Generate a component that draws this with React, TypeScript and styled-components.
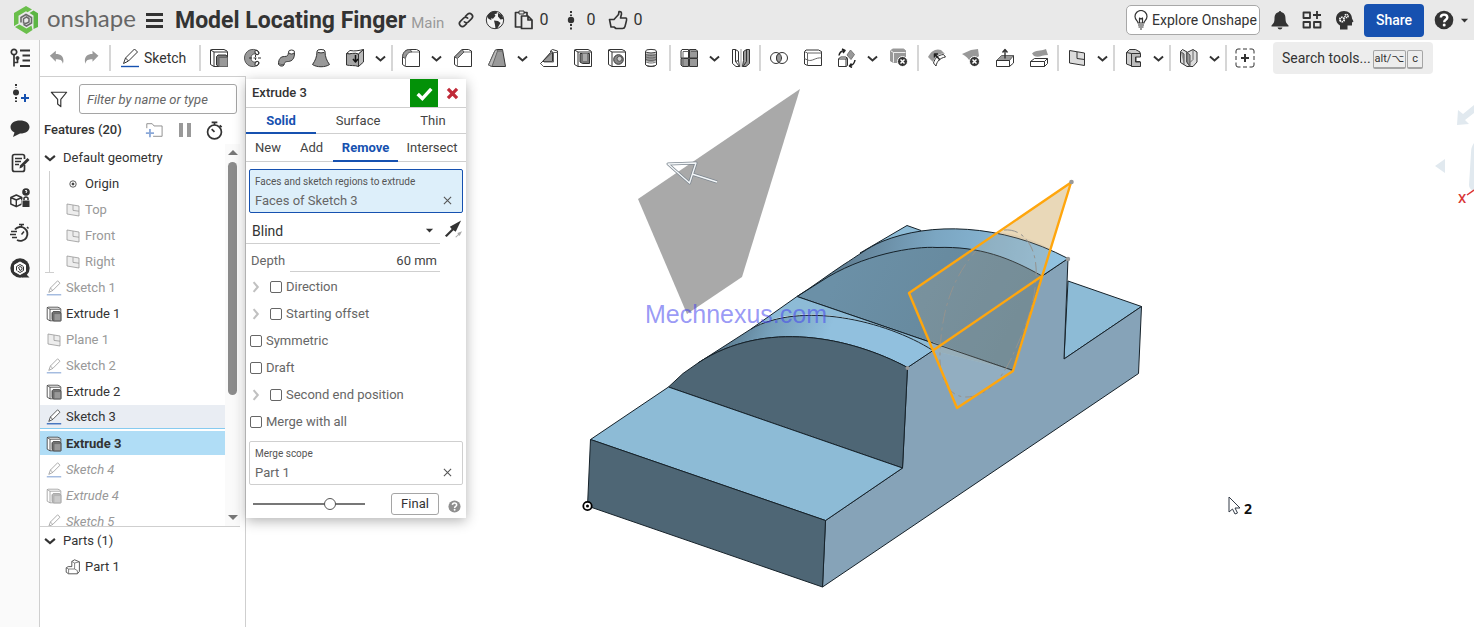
import React from "react";
import styled, { createGlobalStyle, css } from "styled-components";

const ink = "#333333";
const blue = "#1651b0";
const line = "#cfcfcf";

const GlobalStyle = createGlobalStyle`
  * { box-sizing: border-box; }
  body {
    margin: 0;
    background: #fff;
    color: ${ink};
    font-family: Roboto, "Liberation Sans", sans-serif;
    font-size: 14px;
    line-height: 20px;
  }
  button, input, select { font: inherit; color: inherit; }
  button { border: 0; padding: 0; background: none; cursor: pointer; }
  ul { list-style: none; margin: 0; padding: 0; }
  h1, h2 { margin: 0; font: inherit; }
  svg { display: block; flex: none; }
`;

/* ---------- icons ---------- */

const shapes: Record<string, React.ReactNode> = {
  undo: <path d="M1 8l7-6v4c6 0 9 3 9 8 0 2-1 3-1 3 0-4-3-5-8-5v3z" transform="translate(2 1) scale(.85)" fill="#999" stroke="none" />,
  redo: <path d="M17 8L10 2v4c-6 0-9 3-9 8 0 2 1 3 1 3 0-4 3-5 8-5v3z" transform="translate(3 1) scale(.85)" fill="#999" stroke="none" />,
  sketch: (
    <>
      <path d="M3.500 15.500l2-5.500 9-9 3 3-9 9z" fill="#fff" />
      <path d="M5.500 10l3 3" />
      <path d="M1 18.500h18" stroke={blue} strokeWidth="1.400" />
    </>
  ),
  extrude: (
    <>
      <path d="M1.500 3V2l1.500-.5h12l3 1.500q.5.300.5 1v14.500H5l-3.500-2z" fill="#fff" />
      <path d="M1.500 2L5 4h13M5 4v14.500" />
      <path d="M7.500 8.500l1.500-1.500h8l1.500 2v9.500H9.500l-2-1.500z" fill="#777" />
      <path d="M10 9.500h8.500v9H10z" fill="#999" stroke="#666" />
    </>
  ),
  revolve: (
    <>
      <path d="M15 3C9-1 1.500 3 1.500 10S9 21 15 17c2-1.500 1-4-1.500-3.500C11 15 8 13.500 8 10s3-5 5.500-3.500C16 7 17 4.500 15 3z" fill="#999" stroke="#555" />
      <ellipse cx="13.800" cy="4.500" rx="1.600" ry="2.200" fill="#fff" transform="rotate(-30 13.800 4.500)" />
      <ellipse cx="13.800" cy="15.500" rx="1.600" ry="2.200" fill="#fff" transform="rotate(30 13.800 15.500)" />
      <path d="M6 10h13" strokeDasharray="3 1.500" />
      <path d="M12.500 7v6" strokeDasharray="2 1" />
    </>
  ),
  sweep: (
    <>
      <path d="M1.500 16c0-5 2-7.500 6-7.500 3 0 3.500-1 4-4l6 .5c0 6-2.500 8-6 8.500-3.500 0-4 1-4.500 3.500z" fill="#999" />
      <ellipse cx="14.500" cy="4" rx="3" ry="2" fill="#fff" />
      <path d="M1.500 16c.5 2 4 3 5.500 1" fill="#999" />
    </>
  ),
  loft: (
    <>
      <path d="M6 3.500C6 9 4 13 1.500 16.500c4 3 13 3 17 0C16 13 14 9 14 3.500z" fill="#999" />
      <ellipse cx="10" cy="3.200" rx="4" ry="1.700" fill="#fff" />
    </>
  ),
  thicken: (
    <>
      <path d="M1.500 5.500C5 6.500 10 4 13.500 6v12.500C10 17 5 18 1.500 17z" fill="#a5a5a5" />
      <path d="M1.500 5.500L5 2.500c5 1 9 0 13.500-1L13.500 6C10 4 5 6.500 1.500 5.500z" fill="#fff" />
      <path d="M13.500 6l5-4.500V14l-5 4.500z" fill="#bbb" />
      <path d="M10.500 7v6.500M8 11l2.500 3 2.500-3" strokeWidth="1.500" stroke="#111" />
    </>
  ),
  fillet: (
    <>
      <path d="M1.500 9C2 4 5 1.500 9 1.500h6.500l3 1.500v15.500H4.500l-3-2z" fill="#fff" />
      <path d="M1.500 9C2 4 5 1.500 9 1.500L11 4C7 4 5 7 4.500 10.500z" fill="#999" stroke="#555" />
      <path d="M11 4h7M4.500 10.500v8" stroke="#777" />
    </>
  ),
  chamfer: (
    <>
      <path d="M1.500 9L9 1.500h6.500l3 1.500v15.500H4.500l-3-2z" fill="#fff" />
      <path d="M1.500 9L9 1.500 11 4l-6.500 6.500z" fill="#999" stroke="#555" />
      <path d="M11 4h7M4.500 10.500v8" stroke="#777" />
    </>
  ),
  draft: (
    <>
      <path d="M1.500 17L8 2.500l2-1h5.500l3 17H5z" fill="#999" />
      <path d="M8 2.500l2-1 .5 1.500L5 18.500 1.500 17z" fill="#bbb" stroke="#666" />
      <path d="M10.500 3H16" stroke="#666" />
    </>
  ),
  rib: (
    <>
      <path d="M1.500 15.500l2-2 8-9V3l2-1.500 5 1.500v15.500h-14z" fill="#fff" />
      <path d="M3.500 13.500L13.500 4v9.500z" fill="#999" />
      <path d="M11.500 3l3 1.500h4M14.500 4.500v9.500H5M1.500 15.500l3 3" stroke="#666" />
    </>
  ),
  shell: (
    <>
      <path d="M1.500 3V2l1.500-.5h12l3 1.500q.5.300.5 1v14.500H5l-3.500-2z" fill="#fff" />
      <path d="M1.500 2L5 4h13M5 4v14.500" />
      <path d="M7 5.500h9.500v10H9.500L7 14z" fill="#777" />
      <path d="M9.500 5.500h5v8h-5z" fill="#aaa" stroke="#777" />
    </>
  ),
  hole: (
    <>
      <path d="M1.500 3V2l1.500-.5h12l3 1.500q.5.300.5 1v14.500H5l-3.500-2z" fill="#fff" />
      <path d="M1.500 2L5 4h13M5 4v14.500" />
      <circle cx="11.500" cy="11.500" r="4.800" fill="#888" />
      <circle cx="12.500" cy="10.800" r="2.500" fill="#ccc" stroke="#555" />
    </>
  ),
  thread: (
    <>
      <path d="M4.500 3.500v13c1 2.500 10 2.500 11 0v-13z" fill="#fff" />
      <path d="M4.500 5.500v7c2 2 9 2 11 0v-7z" fill="#999" stroke="none" />
      <path d="M4.500 6c2 2 9 2 11 0M4.500 8.500c2 2 9 2 11 0M4.500 11c2 2 9 2 11 0M4.500 13.500c2 2 9 2 11 0" stroke="#666" />
      <path d="M4.500 3v13.500c1 2.500 10 2.500 11 0V3" />
      <ellipse cx="10" cy="3.200" rx="5.500" ry="1.800" fill="#fff" />
    </>
  ),
  pattern: (
    <>
      <path d="M2 3l1-1.500h6.500V10H2z" fill="#fff" />
      <path d="M10.500 1.500H17L18.500 3v7h-8zM2 10.500h7.500v8H3.500L2 17zM10.500 10.500h8v8h-8z" fill="#999" />
      <path d="M4 3.500h5.500M12 3.500h6M4 3.500V18" stroke="#666" />
    </>
  ),
  mirror: (
    <>
      <path d="M1.500 1.500h3v12l4 5H5l-3.500-3z" fill="#fff" />
      <path d="M4.500 1.500l3 2v9l1 6M4.500 13.500l3-1" />
      <path d="M18.500 1.500h-3l-3 2v9l-1 6H15l3.500-3z" fill="#999" />
      <path d="M15.500 1.500v12l-3.500 5" />
      <path d="M10 1v18" stroke="#999" />
    </>
  ),
  boolean: (
    <>
      <circle cx="7" cy="10" r="5.500" fill="#fff" />
      <circle cx="13" cy="10" r="5.500" fill="#fff" />
      <path d="M10 5.400a5.500 5.500 0 0 1 0 9.200 5.500 5.500 0 0 1 0-9.200z" fill="#999" />
    </>
  ),
  split: (
    <>
      <path d="M1.500 3.500l1.500-1.500h12.500l3 1.500v14H4.500l-3-1.500z" fill="#fff" />
      <path d="M1.500 3.500l3 1.500h14M4.500 5v12.500M1.500 10.500l3 1.500c5 2 8-3 14-2" stroke="#666" />
    </>
  ),
  transform: (
    <>
      <path d="M1.500 11l2-2H9l1.500 1.500v7L9 18.500H1.500z" fill="#fff" />
      <path d="M1.500 11H9v7.500M9 11l1.500-1" />
      <path d="M13.500 2l4 4.500-3.500 5-4-4.500z" fill="#999" stroke="#777" />
      <path d="M2 7.500C2.500 4.500 4 3 7 2.500M5 1l3 1.500-2 2.500M18 12c-.5 3-2 5-5 6M15 19.500L12.500 18l2-2.500" strokeWidth="1.500" stroke="#222" />
    </>
  ),
  deletePart: (
    <>
      <path d="M1.500 3l2-2h11l2 1.500v12H4.500l-3-1.500z" fill="#999" stroke="#999" />
      <path d="M2 3l2.500 1.500h12M4.500 4.500v10" stroke="#eee" />
      <circle cx="13.500" cy="13.500" r="5" fill={ink} stroke="#fff" />
      <path d="M11.500 11.500l4 4m0-4l-4 4" stroke="#fff" strokeWidth="1.500" />
    </>
  ),
  modifyFillet: (
    <>
      <path d="M1 9C4 3 9 0 14 2l4 4c-5-1-9 1-12 8z" fill="#999" stroke="none" />
      <path d="M9 18c1-5 4-8 9.500-9l-2-2.500C11 7 8 10 6.500 15z" fill="#fff" />
      <path d="M13 12L8 6.500M7.500 9.500V6H11" strokeWidth="1.500" stroke="#222" />
    </>
  ),
  deleteFace: (
    <>
      <path d="M1 6l9-4 7-1 1 7-8 7C8 11 5 8 1 6z" fill="#999" stroke="none" />
      <circle cx="13.500" cy="13.500" r="5" fill={ink} stroke="#fff" />
      <path d="M11.500 11.500l4 4m0-4l-4 4" stroke="#fff" strokeWidth="1.500" />
    </>
  ),
  moveFace: (
    <>
      <path d="M1.500 12.500l4-4 9 0 4-1v7.500l-4 3.500h-13z" fill="#fff" />
      <path d="M1.500 12.500l5-5 12 0-4 5z" fill="#999" stroke="#666" />
      <path d="M14.500 12.500v6M1.500 12.500h13" />
      <path d="M10 10.500V2M7.500 4.500L10 1.500l2.500 3" strokeWidth="1.400" />
    </>
  ),
  replaceFace: (
    <>
      <path d="M3 5.500c4-4 8-2 14-4.500l2 6c-6 0-9 3-14 1z" fill="#999" stroke="none" />
      <path d="M1.500 13.500l4-3h13v5l-3 3h-14z" fill="#fff" />
      <path d="M1.500 13.500h14v5M15.500 13.500l3-3" />
    </>
  ),
  plane: (
    <>
      <path d="M2.500 2.500l15 2.500v12.500l-15-2.500z" fill="#ddd" />
      <path d="M10 4v6.500l7.500 1" />
    </>
  ),
  sheet: (
    <>
      <path d="M3.500 4.500l3-3h6l4.500 2.500v4.500h-4v5h4v5h-7L3.500 16z" fill="#ccc" />
      <path d="M8.500 5.500h9V9h-5v5h5v4.500h-9z" fill="#bbb" />
      <path d="M3.500 4.500l5 1" />
    </>
  ),
  bend: (
    <>
      <path d="M1.500 3.500l2-2 4.500 2.500v10l3 4.500H8l-6.500-4z" fill="#ddd" />
      <path d="M8 14V4.500l6-3 4 2.500v10l-4 4.500h-3z" fill="#ddd" />
      <path d="M8 4.500l3 2.500v11.500L8 14zM1.500 3.500L5 6v10.500" fill="#999" stroke="#555" />
      <path d="M14 1.500v10l-3 3" stroke="#666" />
    </>
  ),
  addTool: (
    <>
      <path d="M5.500 1H3Q1 1 1 3v2.500M14.500 1H17q2 0 2 2v2.500M5.500 19H3q-2 0-2-2v-2.500M14.500 19H17q2 0 2-2v-2.500M8 1h4M8 19h4M1 8v4M19 8v4" />
      <path d="M10 6v8M6 10h8" strokeWidth="2" />
    </>
  ),
  part: (
    <>
      <path d="M1.500 11l2.500-1.500h4.500V3l3.500-2 6 2.500v12L15.500 18.500h-11l-3-2z" fill="#fff" />
      <path d="M1.500 11l3 1.500h7.500V5l6-1.500M8.500 3L12 5M4.500 12.500v6M12 12.500l3.500 2v4" stroke="#666" />
    </>
  ),
  origin: (
    <>
      <circle cx="10" cy="10" r="4" />
      <circle cx="10" cy="10" r="1.300" fill={ink} />
    </>
  ),
  filter: <path d="M1.500 2.500h17l-6.500 8v8L8.500 15.500v-5z" strokeWidth="1.300" />,
  folder: (
    <>
      <path d="M2 8V3h6l2 2.500h9V17H9" stroke="#888" />
      <path d="M5.500 9v9M1 13.500h9" stroke="#8aa8d8" strokeWidth="2" />
    </>
  ),
  pause: <path d="M4 3h4v14H4zM12 3h4v14h-4z" fill="#999" stroke="none" />,
  stopwatch: (
    <>
      <circle cx="10" cy="11.500" r="7.300" strokeWidth="1.800" />
      <path d="M7 1.500h6M10 1.500v3M15.500 4.500l2 2M10 11.500L7 8.500" strokeWidth="1.800" />
    </>
  ),
  featureTree: (
    <>
      <circle cx="4" cy="4" r="2.700" strokeWidth="1.700" />
      <path d="M4 7v11.500M4 14.500h3.500V11" strokeWidth="1.700" />
      <circle cx="7.500" cy="10" r="1.500" fill={ink} />
      <path d="M10 2.500h10M12.500 7.500H20M12.500 12.500H20M10 18h10" strokeWidth="1.900" />
    </>
  ),
  addVersion: (
    <>
      <path d="M6 1v4M6 14v5" strokeWidth="2" strokeDasharray="2 1.500" />
      <circle cx="6" cy="9.500" r="3" fill={ink} stroke="none" />
      <path d="M15 11v8M11 15h8" stroke={blue} strokeWidth="2" />
    </>
  ),
  comment: <path d="M10 2.500c5.500 0 9.500 2.700 9.500 6.500S16 15.500 10 15.500L3 19l1.500-4.500C2 13.500.5 11.500.5 9 .5 5.200 4.500 2.500 10 2.500z" fill={ink} stroke="none" />,
  notes: (
    <>
      <path d="M14.500 12v4.500q0 2-2 2h-8q-2 0-2-2v-13q0-2 2-2h8q2 0 2 2V6" strokeWidth="1.700" />
      <path d="M5 5.500h7M5 8.500h6M5 11.500h4" strokeWidth="1.300" />
      <path d="M9.500 15.500l.5-3L17.500 5l2 2-7.500 7.500z" fill={ink} stroke="none" />
    </>
  ),
  cubeLock: (
    <>
      <path d="M.8 9.500l5.500-2.500 5.500 2.500v6.500l-5.500 2.700L.8 16zM.8 9.500l5.500 2.500 5.500-2.500M6.300 12v6.500" strokeWidth="1.400" />
      <circle cx="16" cy="4" r="3.800" fill={ink} stroke="none" />
      <path d="M15 3q1-1.500 2 0c0 1-1 1-1 2" stroke="#fff" />
      <path d="M12 12h8v7.500h-8z" fill={ink} stroke="#fafafa" />
      <path d="M14 12V10q2-2 4 0v2" strokeWidth="1.500" />
    </>
  ),
  fastWatch: (
    <>
      <path d="M5 6.500A7 7 0 1 1 7 17" strokeWidth="1.900" />
      <path d="M9 1.500h5M11.500 1.500v3M17 4l1.500 1.500M11.500 11.500L14 8.500M1 8.500h6M0 11.500h6M2 14.500h5" strokeWidth="1.500" />
    </>
  ),
  onshapeBubble: (
    <>
      <circle cx="10" cy="10" r="9.700" fill={ink} stroke="none" />
      <path d="M12 12l7.500 7.500H12z" fill={ink} stroke="none" />
      <path d="M10 4l5.500 3v6.500L10 16.500 4.500 13.500V7z" stroke="#fff" fill="#fff" />
      <path d="M6.500 12.500V8.500L10 6.500l3.500 2M13.500 9v3.500L10 14.500l-2.500-1.500M8.500 9.500l1.500-1 2 1v2l-2 1z" stroke={ink} />
    </>
  ),
  link: (
    <g transform="rotate(-45 10 10)" strokeWidth="1.600">
      <path d="M8.500 13H5a3 3 0 0 1 0-6h5a3 3 0 0 1 2.500 3.500" />
      <path d="M11.500 7H15a3 3 0 0 1 0 6h-5a3 3 0 0 1-2.500-3.500" />
    </g>
  ),
  globe: (
    <>
      <circle cx="10" cy="10" r="8.700" fill="#f3f3f3" />
      <path d="M3 5C5 2 8 1 11 1.300l1.500 2-3 1 1 1.500-2.500 3-2-.5.500 2-3-1.500L2 6.500zM13 3l4 2 1.500 4-3 .500-2.500-3zM9 10.500l4 .500 2.500 2-3 5-2 .700-.500-4z" fill={ink} stroke="none" />
    </>
  ),
  copyDoc: (
    <>
      <path d="M7 17H1.500V2.500H13V6" strokeWidth="1.700" />
      <path d="M5 1h5v3H5z" fill="#e9e9e9" />
      <path d="M7.500 6H14l4 4v8.500H7.500zM14 6v4h4" strokeWidth="1.700" />
    </>
  ),
  version: (
    <>
      <path d="M10 1v5M10 14v5.500" strokeWidth="2" strokeDasharray="2 1.500" />
      <circle cx="10" cy="10" r="3.200" fill={ink} stroke="none" />
    </>
  ),
  thumb: <path d="M1.500 9.500h4.500l4.500-5 .5-3q2.500-.5 2.500 2.500L12.500 8h5.500q1 .5.500 2.500l-1.500 6q-.5 2-2.500 2H8L6 17H3z" strokeWidth="1.600" />,
  bulb: (
    <path d="M7 13c0-2-3-3-3-6.500a6 6 0 0 1 12 0C16 10 13 11 13 13zM7 15h6M7.500 17h5M9 19h2M8.500 12.500V8l1.500 1 1.500-1v4.500" strokeWidth="1.200" />
  ),
  bell: <path d="M10 1q1 0 1.200 1C14.500 3 15.500 5 15.500 9c0 3 1 4.500 3 6.500v1h-17v-1c2-2 3-3.500 3-6.500 0-4 1-6 4.300-7Q9 1 10 1zM7.500 17.500h5Q12 19.500 10 19.500t-2.500-2z" fill={ink} stroke="none" />,
  apps: <path d="M1.500 2.500h6.500v5.500H1.500zM1.500 12h6.500v5.500H1.500zM12 12h6.500v5.500H12zM15 1v8M11 5h8" strokeWidth="1.800" />,
  head: (
    <>
      <path d="M6 19.500v-4C3.500 14 2 11.500 2 9c0-5 3.500-8 8-8s8 3 8 7.500l1.500 3-1.500 1v3h-4.500v4z" fill={ink} stroke="none" />
      <circle cx="8" cy="9.500" r="2.200" stroke="#fff" strokeWidth="1.800" strokeDasharray="1.500 .6" />
      <circle cx="12.500" cy="6" r="1.600" stroke="#fff" strokeWidth="1.500" strokeDasharray="1.200 .5" />
    </>
  ),
  help: (
    <>
      <circle cx="10" cy="10" r="9.300" fill="currentColor" stroke="none" />
      <path d="M6.800 7.500C7 3.500 13.300 3.800 13.300 7.500c0 2.300-3.100 2.300-3.100 4.700" stroke="#fff" strokeWidth="2.400" />
      <circle cx="10.200" cy="15" r="1.500" fill="#fff" stroke="none" />
    </>
  ),
  chevDown: <path d="M3 7l7 6 7-6" strokeWidth="3" strokeLinejoin="miter" />,
  chevRight: <path d="M6 2l7 8-7 8" strokeWidth="3.400" strokeLinejoin="miter" />,
  caret: <path d="M2 6h16l-8 8.500z" fill={ink} stroke="none" />,
  check: <path d="M2 10.500l5.500 5.500L18 4.500" stroke="#fff" strokeWidth="4" strokeLinejoin="miter" />,
  cross: <path d="M3 3l14 14M17 3L3 17" stroke="#c02a38" strokeWidth="5" />,
  clear: <path d="M2 2l16 16M18 2L2 18" strokeWidth="2.400" stroke="#555" />,
  flip: (
    <>
      <path d="M1 17.500L8.500 10 6.500 7.500 19 .5 13 13l-2.500-1.500L3 19z" fill={ink} stroke="none" />
      <path d="M12.500 19l3-3-.5-1.500 5-2-2.500 5-1.500-.5-2.500 2.500z" fill="#aaa" stroke="none" />
    </>
  ),
};

const Glyph = styled.svg<{ $dim?: boolean }>`
  opacity: ${(p) => (p.$dim ? 0.5 : 1)};
`;

function Icon({ name, size = 20, dim }: { name: string; size?: number; dim?: boolean }) {
  return (
    <Glyph width={size} height={size} viewBox="0 0 20 20" fill="none" stroke={ink} strokeLinejoin="round" $dim={dim} aria-hidden="true">
      {shapes[name]}
    </Glyph>
  );
}

/* ---------- page frame ---------- */

const Page = styled.div`
  display: flex;
  flex-direction: column;
  height: 100vh;
  overflow: hidden;
`;

const Header = styled.header`
  display: flex;
  align-items: center;
  height: 40px;
  flex: none;
  padding: 0 5px 0 14px;
  background: #e9e9e9;
`;

const Brand = styled.a`
  display: flex;
  align-items: center;
  gap: 8px;
  width: 132px;
  color: #666;
  font: 400 24px/30px Lato, sans-serif;
  text-decoration: none;
`;

const BrandName = styled.span`
  padding-bottom: 4px;
`;

const MenuButton = styled.button`
  display: grid;
  gap: 3px;
  width: 17px;
  margin-right: 12px;
`;

const MenuBar = styled.span`
  height: 3px;
  background: ${ink};
`;

const DocTitle = styled.h1`
  padding-top: 2px;
  font-size: 23px;
  line-height: 28px;
  font-weight: 700;
  white-space: nowrap;
`;

const Branch = styled.span`
  margin: 6px 12px 0 5px;
  font-size: 15px;
  color: #999;
`;

const HeadStat = styled.button<{ $wide?: boolean }>`
  display: flex;
  align-items: center;
  gap: 5px;
  margin-right: ${(p) => (p.$wide ? 13 : 9)}px;
  font-size: 16px;
`;

const HeadEnd = styled.div`
  display: flex;
  align-items: center;
  gap: 12px;
  margin-left: auto;
`;

const ExploreButton = styled.button`
  display: flex;
  align-items: center;
  gap: 1px;
  height: 30px;
  width: 134px;
  margin-right: -2px;
  padding-left: 4px;
  border: 1px solid #a8a8a8;
  border-radius: 5px;
  background: #fff;
  white-space: nowrap;
`;

const ShareButton = styled.button`
  width: 60px;
  height: 33px;
  margin-left: -2px;
  border-radius: 4px;
  background: ${blue};
  color: #fff;
  font-weight: 500;
`;

const HelpButton = styled.button`
  display: flex;
  align-items: center;
  gap: 6px;
  margin-left: -2px;
`;

const Main = styled.div`
  display: flex;
  flex: 1;
  min-height: 0;
`;

const Rail = styled.nav`
  display: flex;
  flex-direction: column;
  flex: none;
  width: 40px;
  border-right: 1px solid ${line};
  background: #fafafa;
`;

const RailButton = styled.button`
  display: grid;
  place-items: center;
  height: 35px;
`;

const Content = styled.div`
  display: flex;
  flex: 1;
  flex-direction: column;
  min-width: 0;
`;

/* ---------- toolbar ---------- */

const Toolbar = styled.div`
  display: flex;
  align-items: center;
  flex: none;
  height: 36px;
`;

const Tool = styled.button`
  display: grid;
  place-items: center;
  flex: none;
  width: 34px;
  height: 30px;
`;

const MoreTools = styled(Tool)`
  width: 18px;
  padding-right: 2px;
`;

const SketchTool = styled.button`
  display: flex;
  align-items: center;
  gap: 4px;
  flex: none;
  width: 86px;
  padding-left: 8px;
`;

const Divider = styled.span`
  flex: none;
  width: 2px;
  height: 26px;
  margin: 0 1px;
  background: #d6d6d6;
`;

const SearchTools = styled.button`
  display: flex;
  align-items: center;
  flex: none;
  width: 160px;
  height: 32px;
  margin-left: 11px;
  padding-left: 9px;
  border-radius: 4px;
  background: #ededed;
`;

const Key = styled.kbd`
  display: grid;
  place-items: center;
  min-width: 16px;
  height: 19px;
  margin-left: 1px;
  padding: 0 1px;
  border: 1px solid #a5a5a5;
  border-bottom-width: 2px;
  border-radius: 2px;
  font: 11px/14px Roboto, "DejaVu Sans", sans-serif;
`;

const KeyGroup = styled.span`
  display: flex;
  margin: 2px 0 0 1px;
`;

/* ---------- feature tree ---------- */

const Workspace = styled.div`
  display: flex;
  flex: 1;
  min-height: 0;
`;

const TreePanel = styled.aside`
  display: flex;
  flex-direction: column;
  flex: none;
  width: 206px;
  border: solid ${line};
  border-width: 1px 1px 0 0;
`;

const FilterRow = styled.label`
  display: flex;
  align-items: center;
  gap: 11px;
  height: 44px;
  padding: 0 8px 0 10px;
`;

const FilterInput = styled.input`
  flex: 1;
  min-width: 0;
  height: 30px;
  padding: 0 7px;
  border: 1px solid #a5a5a5;
  border-radius: 3px;
  font-size: 13px;
  &::placeholder {
    color: #666;
    font-style: italic;
    opacity: 1;
  }
`;

const TreeTitle = styled.div`
  display: flex;
  align-items: center;
  height: 23px;
  padding: 0 0 5px 4px;
`;

const TreeName = styled.h2`
  width: 101px;
  font-size: 13px;
  font-weight: 500;
`;

const TreeAction = styled.button`
  width: 30px;
`;

const TreeBody = styled.div`
  display: flex;
  flex: 1;
  min-height: 0;
  margin-right: 5px;
  border-bottom: 1px solid ${line};
`;

const TreeList = styled.ul`
  flex: 1;
  min-width: 0;
  padding-top: 1px;
  overflow: hidden;
`;

const TreeGroup = styled.ul`
  position: relative;
  margin-left: 9px;
  border-left: 1px solid ${line};
  &::after {
    content: "";
    position: absolute;
    left: -5px;
    bottom: 0;
    width: 9px;
    border-bottom: 1px solid ${line};
  }
`;

type RowKind = "normal" | "hidden" | "pending" | "linked" | "active";

const TreeRow = styled.li<{ $kind?: RowKind; $inset?: number }>`
  display: flex;
  align-items: center;
  gap: 4px;
  height: 24px;
  margin-bottom: 2px;
  padding-top: 1px;
  padding-left: ${(p) => p.$inset ?? 6}px;
  font-size: 13px;
  white-space: nowrap;
  ${(p) => (p.$kind === "hidden" || p.$kind === "pending") && css`color: #999;`}
  ${(p) => p.$kind === "pending" && css`font-style: italic;`}
  ${(p) =>
    p.$kind === "linked" &&
    css`
      background: #e9edf3;
      border-bottom: 1px solid #86cbf0;
    `}
  ${(p) =>
    p.$kind === "active" &&
    css`
      background: #b0ddf6;
      font-weight: 700;
    `}
`;

const FolderRow = styled(TreeRow)`
  gap: 6px;
  padding-left: 3px;
`;

const ScrollTrack = styled.div`
  display: flex;
  flex-direction: column;
  align-items: center;
  width: 15px;
  padding: 3px 0 4px;
  background: #fafafa;
`;

const ScrollThumb = styled.div`
  width: 9px;
  height: 62%;
  margin: 5px 0 auto;
  border-radius: 5px;
  background: #8b8b8b;
`;

const Arrow = styled.span<{ $up?: boolean }>`
  margin: 3px 0 2px;
  border: 5px solid transparent;
  ${(p) => (p.$up ? css`border-top: 0; border-bottom-color: #777;` : css`border-bottom: 0; border-top-color: #777;`)}
`;

const Parts = styled.ul`
  flex: none;
  height: 100px;
  padding-top: 1px;
`;

/* ---------- viewport and dialog ---------- */

const Viewport = styled.main`
  position: relative;
  flex: 1;
  min-width: 0;
`;

const Scene = styled.svg`
  width: 100%;
  height: 100%;
`;

const Dialog = styled.form`
  position: absolute;
  left: 0;
  top: 3px;
  width: 220px;
  background: #fff;
  box-shadow: 0 3px 12px rgba(0, 0, 0, 0.3);
  font-size: 13px;
`;

const DialogHead = styled.div`
  display: flex;
  height: 29px;
  border-bottom: 1px solid ${line};
  padding-left: 6px;
`;

const DialogTitle = styled.h2`
  flex: 1;
  font-weight: 500;
  line-height: 28px;
`;

const HeadButton = styled.button<{ $accept?: boolean }>`
  display: grid;
  place-items: center;
  width: 28px;
  height: 28px;
  background: ${(p) => (p.$accept ? "#039108" : "none")};
`;

const Tabs = styled.div<{ $height: number }>`
  display: flex;
  height: ${(p) => p.$height}px;
  border-bottom: 1px solid ${line};
`;

const Tab = styled.button<{ $grow: number; $on?: boolean }>`
  flex: ${(p) => p.$grow} 1 0;
  min-width: 0;
  margin-bottom: -1px;
  padding-top: 2px;
  border-bottom: 2px solid ${(p) => (p.$on ? blue : "transparent")};
  font-weight: ${(p) => (p.$on ? 700 : 400)};
  color: ${(p) => (p.$on ? blue : "#444")};
`;

const QueryBox = styled.div<{ $focus?: boolean }>`
  display: grid;
  grid-template-columns: 1fr 20px;
  align-content: center;
  height: 44px;
  margin: 7px 3px 0;
  padding: 1px 5px 0;
  border: 1px solid ${(p) => (p.$focus ? blue : line)};
  border-radius: 2px;
  background: ${(p) => (p.$focus ? "#ddeffa" : "#fff")};
  color: #666;
`;

const QueryLabel = styled.span`
  grid-column: 1 / 3;
  font-size: 10px;
  line-height: 18px;
  color: #555;
`;

const ClearButton = styled.button`
  display: grid;
  place-items: center;
`;

const EndRow = styled.div`
  display: flex;
  align-items: center;
  gap: 4px;
  height: 31px;
`;

const SelectWrap = styled.label`
  display: flex;
  align-items: center;
  width: 194px;
  height: 31px;
  padding: 5px 6px 0 0;
  border-bottom: 1px solid ${line};
`;

const EndSelect = styled.select`
  flex: 1;
  appearance: none;
  padding: 0 6px;
  border: 0;
  background: none;
  font-size: 14px;
`;

const DepthRow = styled.label`
  display: flex;
  align-items: center;
  gap: 5px;
  height: 28px;
  padding: 6px 26px 0 5px;
  color: #666;
`;

const DepthInput = styled.input`
  flex: 1;
  min-width: 0;
  height: 22px;
  padding: 0 3px;
  border: 0;
  border-bottom: 1px solid ${line};
  color: #444;
  text-align: right;
`;

const OptionRow = styled.div`
  display: flex;
  align-items: center;
  height: 27px;
  padding: 3px 0 0 4px;
  color: #666;
`;

const Expander = styled.button`
  width: 20px;
  opacity: 0.3;
`;

const OptionLabel = styled.label`
  display: flex;
  align-items: center;
  gap: 4px;
`;

const Tick = styled.input`
  appearance: none;
  width: 12px;
  height: 12px;
  margin: 0;
  border: 1px solid #666;
  border-radius: 2px;
  background: #fff;
`;

const DialogFoot = styled.div`
  display: flex;
  align-items: center;
  height: 33px;
  padding: 5px 5px 0 7px;
`;

const Opacity = styled.input`
  appearance: none;
  width: 112px;
  height: 14px;
  margin: 0 26px 0 0;
  background: linear-gradient(#777, #777) center / 100% 2px no-repeat;
  &::-webkit-slider-thumb {
    appearance: none;
    width: 12px;
    height: 12px;
    border: 1px solid #555;
    border-radius: 50%;
    background: #fff;
  }
`;

const FinalButton = styled.button`
  width: 49px;
  height: 22px;
  margin-right: 9px;
  border: 1px solid #a5a5a5;
  border-radius: 3px;
`;

const DialogHelp = styled.button`
  margin-top: 4px;
  color: #8f8f8f;
`;

/* ---------- data ---------- */

const toolGroups: string[][] = [
  ["extrude", "revolve", "sweep", "loft", "thicken", "+"],
  ["fillet", "+", "chamfer", "draft", "+", "rib", "shell", "hole", "thread"],
  ["pattern", "+", "mirror"],
  ["boolean", "split", "transform", "+", "deletePart"],
  ["modifyFillet", "deleteFace", "moveFace", "replaceFace"],
  ["plane", "+"],
  ["sheet", "+"],
  ["bend", "+"],
  ["addTool"],
];

const railTools = ["featureTree", "addVersion", "comment", "notes", "cubeLock", "fastWatch", "onshapeBubble"];

const features: { icon: string; name: string; kind: RowKind }[] = [
  { icon: "sketch", name: "Sketch 1", kind: "hidden" },
  { icon: "extrude", name: "Extrude 1", kind: "normal" },
  { icon: "plane", name: "Plane 1", kind: "hidden" },
  { icon: "sketch", name: "Sketch 2", kind: "hidden" },
  { icon: "extrude", name: "Extrude 2", kind: "normal" },
  { icon: "sketch", name: "Sketch 3", kind: "linked" },
  { icon: "extrude", name: "Extrude 3", kind: "active" },
  { icon: "sketch", name: "Sketch 4", kind: "pending" },
  { icon: "extrude", name: "Extrude 4", kind: "pending" },
  { icon: "sketch", name: "Sketch 5", kind: "pending" },
];

const options = [
  { name: "Direction", nested: true },
  { name: "Starting offset", nested: true },
  { name: "Symmetric", nested: false },
  { name: "Draft", nested: false },
  { name: "Second end position", nested: true },
  { name: "Merge with all", nested: false },
];

/* ---------- drawings ---------- */

function Logo() {
  return (
    <svg width="25" height="28" viewBox="0 0 25 28" aria-hidden="true">
      <path d="M0 20V7L12 0l6 3.500-4.500 2.700L12 5.300 4.500 9.700V17.500z" fill="#6abf4b" />
      <path d="M15.500 7l4-2.500L24 7.200V21l-4.500 2V9.500z" fill="#5cb544" />
      <path d="M1 21l4.500-2.500 7 4 5-3 1 4.500L12.500 28z" fill="#6abf4b" />
      <path d="M7 16.500v-5L12 8.500l5.500 3v5.500L12.500 20l-3-1.700" fill="none" stroke="#6b6b6b" strokeWidth="1.600" />
      <path d="M9.500 17v-4l3-2 2.500 1.500v3.500l-3 1.500z" fill="none" stroke="#6b6b6b" strokeWidth="1.500" />
    </svg>
  );
}

function Model() {
  return (
    <Scene viewBox="246 76 1228 551" role="img" aria-label="Locating finger model">
      <defs>
        <linearGradient id="frontRound" gradientUnits="userSpaceOnUse" x1="722" y1="325" x2="815" y2="365">
          <stop offset="0" stopColor="#567386" />
          <stop offset="0.45" stopColor="#76a0ba" />
          <stop offset="1" stopColor="#91c0de" />
        </linearGradient>
        <linearGradient id="backRound" gradientUnits="userSpaceOnUse" x1="850" y1="250" x2="1050" y2="290">
          <stop offset="0" stopColor="#628196" />
          <stop offset="0.4" stopColor="#7ba6c2" />
          <stop offset="1" stopColor="#91c2e1" />
        </linearGradient>
        <linearGradient id="backWall" gradientUnits="userSpaceOnUse" x1="840" y1="270" x2="1000" y2="350">
          <stop offset="0" stopColor="#6b90a7" />
          <stop offset="1" stopColor="#658699" />
        </linearGradient>
      </defs>

      <path d="M800 89L638 199l49 115 55-37z" fill="#a9a9a9" />
      <g fill="none">
        <path d="M692 174l25 8M668 164l28-1-6.500 20z" stroke="#7d8790" strokeWidth="3" strokeLinejoin="round" />
        <path d="M692 174l25 8M668 164l28-1-6.500 20z" stroke="#f3f6f8" strokeWidth="1.400" strokeLinejoin="round" />
      </g>

      <path d="M1071 182.500L985 241l57 35z" fill="#e9d8b8" />

      <g stroke="#16222a" strokeWidth="1" strokeLinejoin="round">
        <path d="M860 253L907 225.500l14 5 20 40z" fill="#8dbbd6" />
        <path d="M1068 281l73.500 25.500L1064 359z" fill="#8dbbd6" />
        <path d="M825.500 520.500L902.500 468l5-100.500L1068 258.500 1064 359l77.500-52.500-3 67L822.500 587z" fill="#86a3b8" />
        <path d="M797 296.500C812 287 828 275 843 265c16-10 24-17 39-23.500C930 222 1000 223 1068 258.500L1042 276l-29 94z" fill="url(#backRound)" stroke="none" />
        <path d="M797 296.500L820 282C862 254 915 246 937 247.500C980 246 1010 258 1042 276l-29 94.500z" fill="url(#backWall)" />
        <path d="M797 296.500C812 287 828 275 843 265c16-10 24-17 39-23.500C930 222 1000 223 1068 258.500L1042 276" fill="none" />
        <path d="M797 296.500L1013 370.500 933 350.500C890 322 800 298 751 329z" fill="#8dbbd6" stroke="none" />
        <path d="M933 342l80 28.500-80-20z" fill="#8fafc3" stroke="none" />
        <path d="M698 363L751 329C800 301 885 320 933 350.500L907.500 367.500C850 337 765 319 698 363z" fill="url(#frontRound)" />
        <path d="M797 296.500L751 329M797 296.500l216 74" fill="none" />
        <path d="M668.500 387l14.500-13.500L698 363C765 319 850 337 907.500 367.500l-5 100.500z" fill="#4e6675" />
        <path d="M668.500 387L590.500 439.500l235 81L902.500 468z" fill="#8dbbd6" />
        <path d="M590.500 439.500L587.500 506l235 81 3-66.500z" fill="#4e6675" />
      </g>

      <path d="M909 293l91-61c20 3 37 9 50 17l-8 27-109 74.500z" fill="#b9ab92" fillOpacity="0.200" />
      <path d="M933 350.500L1042 276l-29 95z" fill="#b9ab92" fillOpacity="0.200" />
      <path d="M933 350.500l80 20-56 37.500z" fill="#c4dce4" fillOpacity="0.200" />
      <path d="M1004 230C1025 228 1038 250 1036 277c-1 30-15 60-25 82-12 24-26 38-45 38-18 0-27-20-26-42 1-45 13-78 36-104" fill="none" stroke="#94938f" strokeWidth="1" strokeDasharray="14 4 3 4" />
      <path d="M1071 182.500L909 293l48 115 56-37zM933 350.500L1042 276" fill="none" stroke="#ffa60d" strokeWidth="2.400" strokeLinejoin="round" />
      <g fill="#999">
        <circle cx="1071.500" cy="182" r="2.300" />
        <circle cx="1068" cy="259" r="2.200" />
        <circle cx="907.500" cy="368" r="2" />
      </g>

      <circle cx="587.500" cy="506" r="4.200" fill="#fff" stroke="#000" strokeWidth="1.800" />
      <circle cx="587.500" cy="506" r="1.500" fill="#000" />

      <text x="645" y="323" fontFamily="Liberation Sans, sans-serif" fontSize="25" fill="#4444ee" fillOpacity="0.550">Mechnexus.com</text>

      <g fill="#e1e9ef">
        <path d="M1474 105l-11 9-5-4-1 15 12-1-4-4 9-7z" />
        <path d="M1435 166l10-7v14z" />
        <path d="M1474 143q-3 4-3 10l-2 32q0 4 5 6z" />
      </g>
      <path d="M1467 195l7-5" stroke="#d33" strokeWidth="1.500" />
      <text x="1458" y="203" fontFamily="Roboto, sans-serif" fontSize="13" fontWeight="500" fill="#d93636">X</text>

      <path d="M1229 497v15l3.500-3 2.500 5 2.500-1-2.500-5h5z" fill="#fff" stroke="#333b47" />
      <text x="1244" y="514" fontFamily="Open Sans, sans-serif" fontSize="14" fontWeight="700" fill="#111">2</text>
    </Scene>
  );
}

function Query({ label, value, focus }: { label: string; value: string; focus?: boolean }) {
  return (
    <QueryBox $focus={focus}>
      <QueryLabel>{label}</QueryLabel>
      <span>{value}</span>
      <ClearButton type="button" aria-label={`Clear ${label}`}>
        <Icon name="clear" size={9} />
      </ClearButton>
    </QueryBox>
  );
}

function ExtrudeDialog() {
  return (
    <Dialog onSubmit={(e) => e.preventDefault()}>
      <DialogHead>
        <DialogTitle>Extrude 3</DialogTitle>
        <HeadButton type="submit" $accept aria-label="Accept"><Icon name="check" size={17} /></HeadButton>
        <HeadButton type="button" aria-label="Cancel"><Icon name="cross" size={13} /></HeadButton>
      </DialogHead>
      <Tabs $height={26}>
        <Tab type="button" $grow={70} $on>Solid</Tab>
        <Tab type="button" $grow={84}>Surface</Tab>
        <Tab type="button" $grow={66}>Thin</Tab>
      </Tabs>
      <Tabs $height={28}>
        <Tab type="button" $grow={44}>New</Tab>
        <Tab type="button" $grow={43}>Add</Tab>
        <Tab type="button" $grow={65} $on>Remove</Tab>
        <Tab type="button" $grow={68}>Intersect</Tab>
      </Tabs>
      <Query label="Faces and sketch regions to extrude" value="Faces of Sketch 3" focus />
      <EndRow>
        <SelectWrap>
          <EndSelect aria-label="End type" defaultValue="Blind"><option>Blind</option></EndSelect>
          <Icon name="caret" size={9} />
        </SelectWrap>
        <Icon name="flip" size={18} />
      </EndRow>
      <DepthRow>
        Depth
        <DepthInput defaultValue="60 mm" />
      </DepthRow>
      {options.map((o) => (
        <OptionRow key={o.name}>
          {o.nested && <Expander type="button" aria-label={`Expand ${o.name}`}><Icon name="chevRight" size={12} /></Expander>}
          <OptionLabel><Tick type="checkbox" />{o.name}</OptionLabel>
        </OptionRow>
      ))}
      <Query label="Merge scope" value="Part 1" />
      <DialogFoot>
        <Opacity type="range" min={0} max={100} defaultValue={71} aria-label="Opacity" />
        <FinalButton type="button">Final</FinalButton>
        <DialogHelp type="button" aria-label="Help"><Icon name="help" size={13} /></DialogHelp>
      </DialogFoot>
    </Dialog>
  );
}

function FeatureTree() {
  return (
    <TreePanel>
      <FilterRow>
        <Icon name="filter" size={18} />
        <FilterInput placeholder="Filter by name or type" aria-label="Filter features" />
      </FilterRow>
      <TreeTitle>
        <TreeName>Features (20)</TreeName>
        <TreeAction aria-label="Add folder"><Icon name="folder" size={18} /></TreeAction>
        <TreeAction aria-label="Pause"><Icon name="pause" size={20} /></TreeAction>
        <TreeAction aria-label="Regeneration times"><Icon name="stopwatch" size={19} /></TreeAction>
      </TreeTitle>
      <TreeBody>
        <TreeList>
          <FolderRow><Icon name="chevDown" size={14} />Default geometry</FolderRow>
          <li>
            <TreeGroup>
              <TreeRow $inset={15}><Icon name="origin" size={16} />Origin</TreeRow>
              {["Top", "Front", "Right"].map((name) => (
                <TreeRow key={name} $kind="hidden" $inset={15}><Icon name="plane" size={16} dim />{name}</TreeRow>
              ))}
            </TreeGroup>
          </li>
          {features.map((f) => (
            <TreeRow key={f.name} $kind={f.kind}>
              <Icon name={f.icon} size={16} dim={f.kind === "hidden" || f.kind === "pending"} />
              {f.name}
            </TreeRow>
          ))}
        </TreeList>
        <ScrollTrack>
          <Arrow $up />
          <ScrollThumb />
          <Arrow />
        </ScrollTrack>
      </TreeBody>
      <Parts>
        <FolderRow><Icon name="chevDown" size={14} />Parts (1)</FolderRow>
        <TreeRow $inset={25}><Icon name="part" size={16} />Part 1</TreeRow>
      </Parts>
    </TreePanel>
  );
}

export default function App() {
  return (
    <Page>
      <GlobalStyle />
      <Header>
        <Brand href="#"><Logo /><BrandName>onshape</BrandName></Brand>
        <MenuButton aria-label="Menu"><MenuBar /><MenuBar /><MenuBar /></MenuButton>
        <DocTitle>Model Locating Finger</DocTitle>
        <Branch>Main</Branch>
        <HeadStat aria-label="Share link"><Icon name="link" /></HeadStat>
        <HeadStat aria-label="Public"><Icon name="globe" /></HeadStat>
        <HeadStat $wide><Icon name="copyDoc" />0</HeadStat>
        <HeadStat $wide><Icon name="version" />0</HeadStat>
        <HeadStat><Icon name="thumb" />0</HeadStat>
        <HeadEnd>
          <ExploreButton><Icon name="bulb" />Explore Onshape</ExploreButton>
          <button aria-label="Notifications"><Icon name="bell" /></button>
          <button aria-label="Apps"><Icon name="apps" /></button>
          <button aria-label="Learning"><Icon name="head" /></button>
          <ShareButton>Share</ShareButton>
          <HelpButton aria-label="Help"><Icon name="help" /><Icon name="caret" size={9} /></HelpButton>
        </HeadEnd>
      </Header>
      <Main>
        <Rail>
          {railTools.map((name) => (
            <RailButton key={name} aria-label={name}><Icon name={name} /></RailButton>
          ))}
        </Rail>
        <Content>
          <Toolbar>
            <Tool aria-label="Undo"><Icon name="undo" /></Tool>
            <Tool aria-label="Redo"><Icon name="redo" /></Tool>
            <Divider />
            <SketchTool><Icon name="sketch" />Sketch</SketchTool>
            {toolGroups.map((group, g) => (
              <React.Fragment key={g}>
                <Divider />
                {group.map((name, i) =>
                  name === "+" ? (
                    <MoreTools key={i} aria-label="More tools"><Icon name="chevDown" size={13} /></MoreTools>
                  ) : (
                    <Tool key={i} aria-label={name}><Icon name={name} /></Tool>
                  )
                )}
              </React.Fragment>
            ))}
            <SearchTools>
              Search tools...
              <KeyGroup><Key>alt/⌥</Key><Key>c</Key></KeyGroup>
            </SearchTools>
          </Toolbar>
          <Workspace>
            <FeatureTree />
            <Viewport>
              <Model />
              <ExtrudeDialog />
            </Viewport>
          </Workspace>
        </Content>
      </Main>
    </Page>
  );
}
